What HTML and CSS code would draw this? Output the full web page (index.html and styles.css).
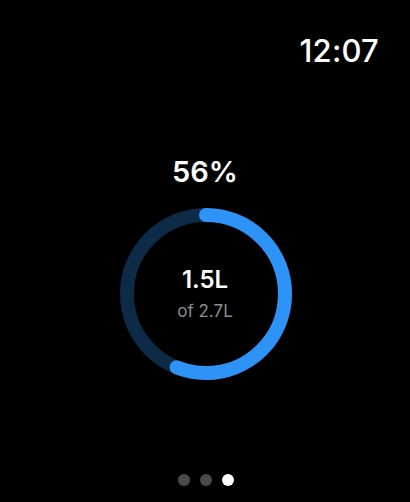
FILE: index.html
```html
<!DOCTYPE html>
<html lang="en">
<head>
<meta charset="utf-8">
<title>Water</title>
<link rel="stylesheet" href="styles.css">
</head>
<body>
<div class="screen">
  <header class="status">
    <span class="clock">12:07</span>
  </header>
  <main class="progress">
    <div class="percent">56%</div>
    <div class="ring">
      <svg class="ring-svg" width="172" height="172" viewBox="0 0 172 172">
        <circle class="ring-track" cx="86" cy="86" r="79"></circle>
        <circle class="ring-fill" cx="86" cy="86" r="79" stroke-dasharray="277.97 496.37" transform="rotate(-90 86 86)"></circle>
      </svg>
      <div class="ring-label">
        <div class="amount">1.5L</div>
        <div class="goal">of 2.7L</div>
      </div>
    </div>
  </main>
  <nav class="pager">
    <span class="dot"></span>
    <span class="dot"></span>
    <span class="dot active"></span>
  </nav>
</div>
</body>
</html>
```
FILE: styles.css
```css
html, body {
  margin: 0;
  padding: 0;
  background: #000;
}

.screen {
  width: 410px;
  height: 502px;
  display: flex;
  flex-direction: column;
  font-family: Inter, "Noto Sans", sans-serif;
  color: #fff;
  box-sizing: border-box;
}

.status {
  display: flex;
  justify-content: flex-end;
  padding: 35px 31px 0 0;
}

.clock {
  font-size: 31px;
  line-height: 1;
  font-weight: 500;
  letter-spacing: 0.2px;
}

.progress {
  display: flex;
  flex-direction: column;
  align-items: center;
  padding-top: 91px;
}

.percent {
  font-size: 29px;
  line-height: 1;
  font-weight: 600;
}

.ring {
  display: grid;
  margin-top: 22px;
  margin-left: 2px;
}

.ring-svg,
.ring-label {
  grid-area: 1 / 1;
}

.ring-track {
  fill: none;
  stroke: #0d2a47;
  stroke-width: 14;
}

.ring-fill {
  fill: none;
  stroke: #2e93f6;
  stroke-width: 14;
  stroke-linecap: round;
}

.ring-label {
  display: flex;
  flex-direction: column;
  align-items: center;
  justify-content: center;
  margin-left: -2px;
}

.amount {
  font-size: 24px;
  line-height: 1;
  font-weight: 600;
}

.goal {
  margin-top: 11px;
  font-size: 17px;
  line-height: 1;
  color: #8c8c8c;
}

.pager {
  margin-top: auto;
  display: flex;
  justify-content: center;
  gap: 10px;
  padding-bottom: 16px;
  padding-left: 1px;
}

.dot {
  width: 12px;
  height: 12px;
  border-radius: 50%;
  background: #4a4a4a;
}

.dot.active {
  background: #fff;
}
```
